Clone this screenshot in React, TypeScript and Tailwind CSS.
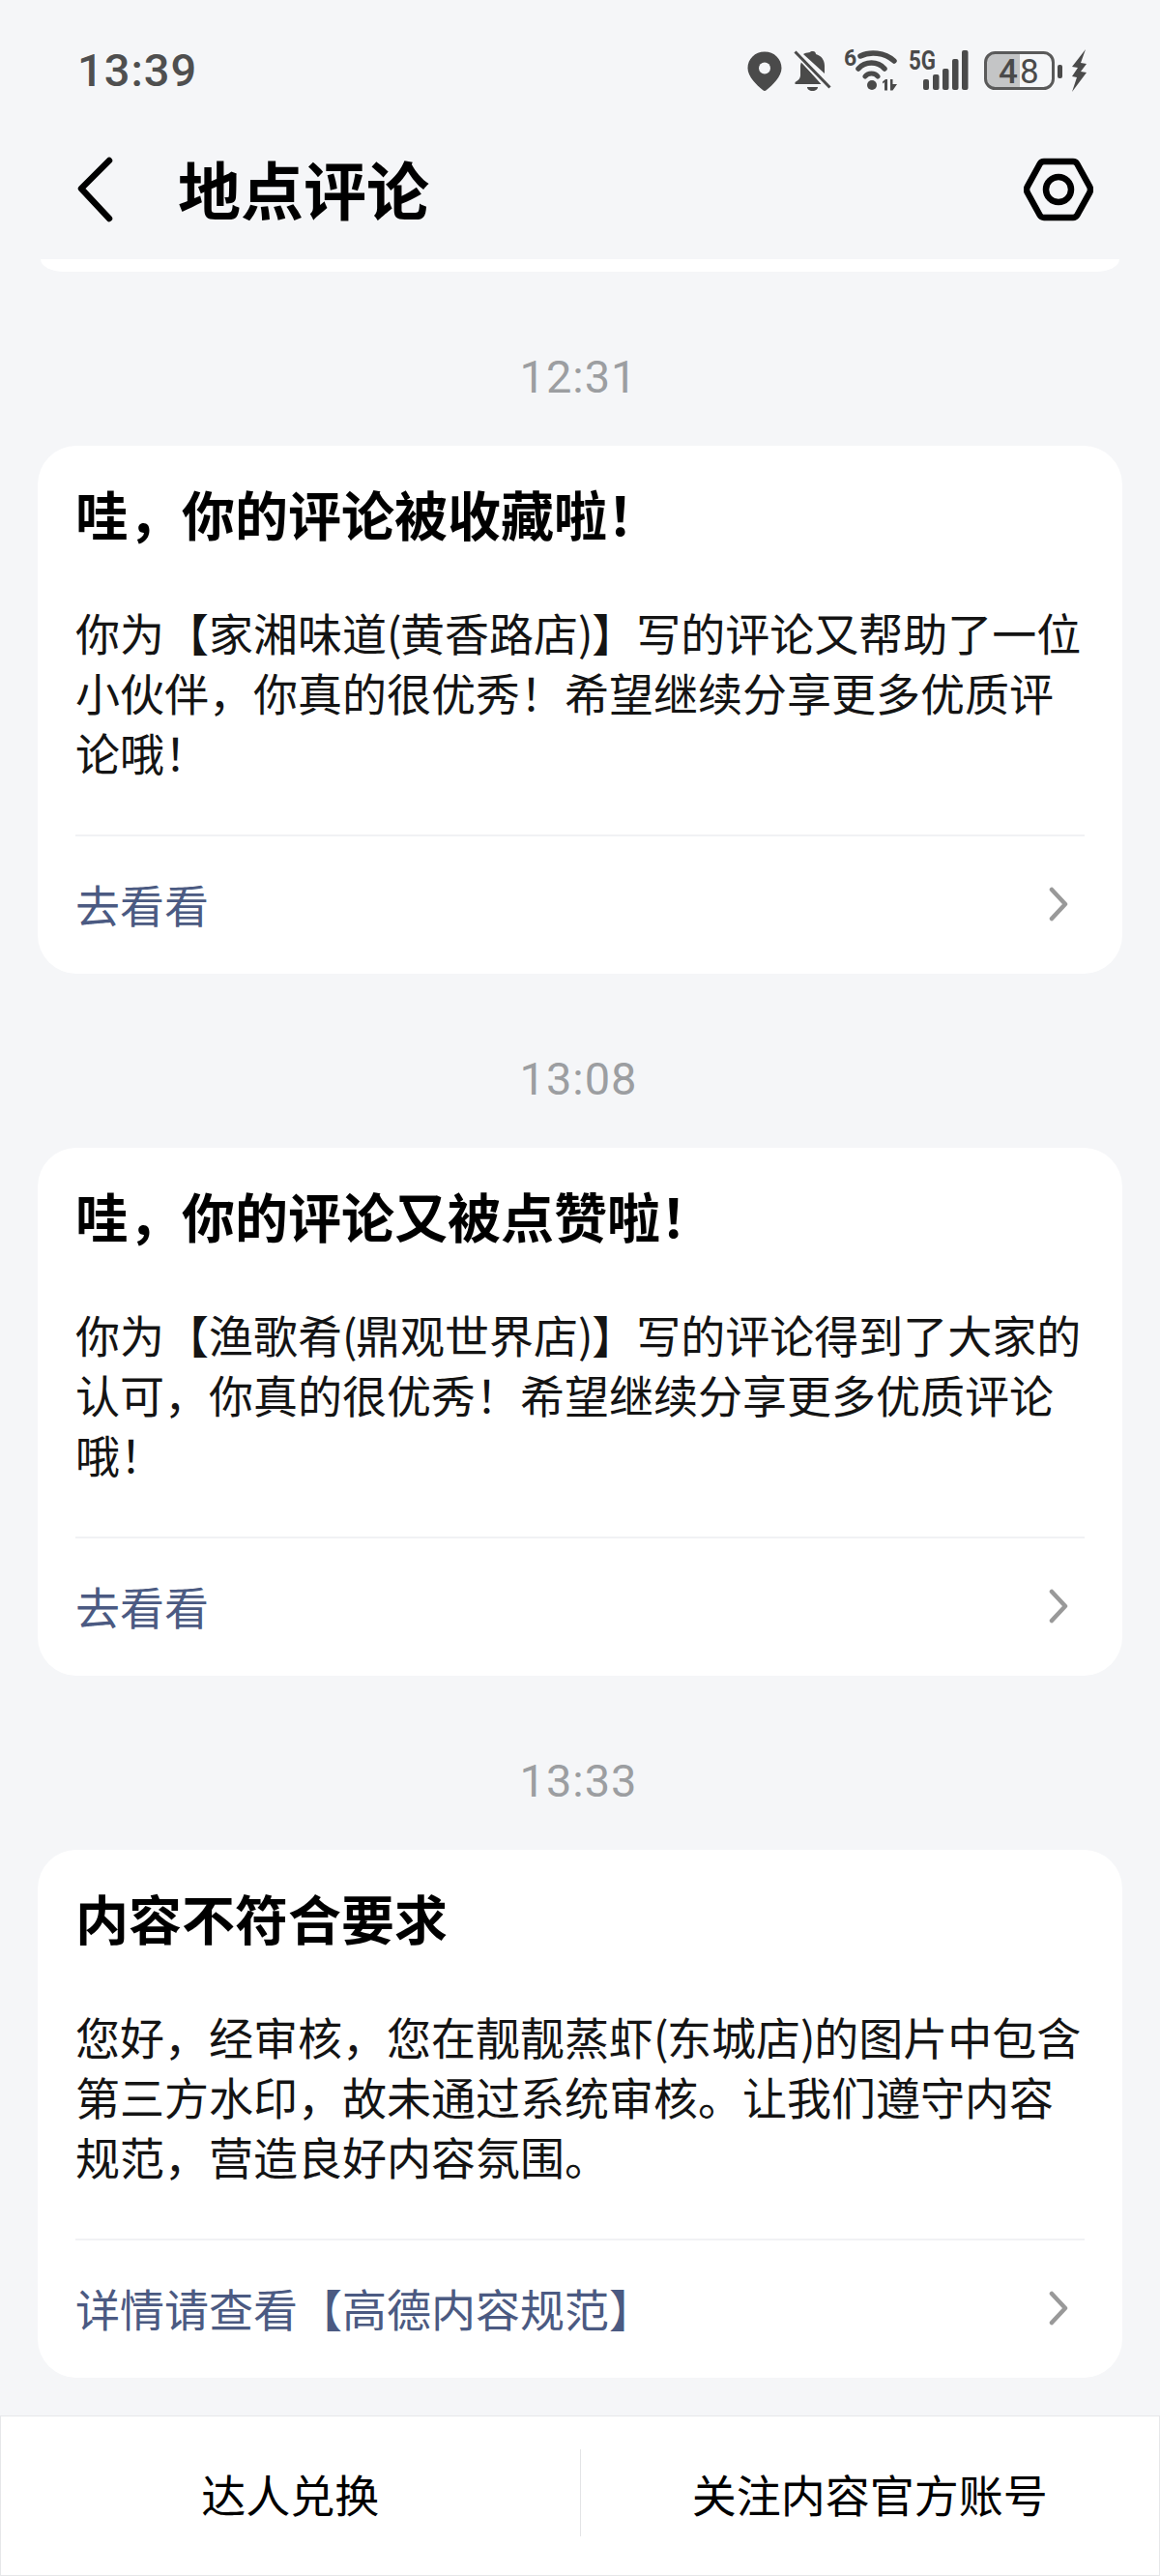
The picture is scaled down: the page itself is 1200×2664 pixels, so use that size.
import React from "react";

const CJK = '"Noto Sans CJK SC", "Noto Sans", sans-serif';

function Pin() {
  return (
    <svg width="36" height="41" viewBox="0 0 36 41" className="shrink-0">
      <path d="M18 0.5C8 .5 .5 8 .5 17.5c0 9 9.5 17.500 15.500 22.500a3 3 0 0 0 4 0C26 35 35.500 26.500 35.500 17.500 35.500 8 28 .5 18 .5Z" fill="#4a4a4a" />
      <circle cx="18" cy="17.500" r="6" fill="#f5f6f8" />
    </svg>
  );
}

function BellOff() {
  return (
    <svg width="39" height="43" viewBox="0 0 39 43" className="shrink-0">
      <path d="M20 1c2 0 3 1.500 3 3 5.500 1.500 9 6 9 12v8l-22-20c2-1 3-1.500 7-2 0-.5 1-1 3-1Z" fill="#4a4a4a" />
      <path d="M8 12c-.5 1.500-1 3-1 5v9c0 3-2 5-5.500 7v2h27L8 12Z" fill="#4a4a4a" />
      <path d="M33 31.500v1.500h-2Z" fill="#4a4a4a" />
      <path d="M14 38h11c0 2-2 4-5.500 4S14 40 14 38Z" fill="#4a4a4a" />
      <path d="M2 2 37 39" stroke="#f5f6f8" strokeWidth="6" />
      <path d="M1.500 1.500 37.500 38.500" stroke="#4a4a4a" strokeWidth="3" />
    </svg>
  );
}

function Wifi() {
  return (
    <svg width="56" height="64" viewBox="0 -10 56 64" className="shrink-0">
      <text x="0" y="17" fontFamily="Roboto, sans-serif" fontWeight="700" fontSize="23" fill="#4a4a4a">6</text>
      <path d="M17 7C27 2 42 3 52 12" fill="none" stroke="#4a4a4a" strokeWidth="5.500" strokeLinecap="round" />
      <path d="M15 20C22 12 35 12 42 20" fill="none" stroke="#4a4a4a" strokeWidth="5.500" strokeLinecap="round" />
      <path d="M22 28C25 24 32 24 35 28" fill="none" stroke="#4a4a4a" strokeWidth="5" strokeLinecap="round" />
      <circle cx="29" cy="37" r="5" fill="#4a4a4a" />
      <path d="M43 31l-3 2.500v2l2-1.500v8.500h3V31Z" fill="#4a4a4a" />
      <path d="M48 31h2.500v5H55l-4.500 6.500H48Z" fill="#4a4a4a" />
    </svg>
  );
}

function Signal() {
  return (
    <svg width="62" height="66" viewBox="0 -12 62 66" className="shrink-0">
      <text x="0" y="20" fontFamily="Roboto, sans-serif" fontWeight="700" fontSize="27" textLength="28" lengthAdjust="spacingAndGlyphs" fill="#4a4a4a">5G</text>
      <rect x="15" y="30" width="6" height="11" rx="2" fill="#4a4a4a" />
      <rect x="25" y="25" width="6.500" height="16" rx="2" fill="#4a4a4a" />
      <rect x="35" y="19" width="6.500" height="22" rx="2" fill="#4a4a4a" />
      <rect x="45" y="9" width="6.500" height="32" rx="2" fill="#4a4a4a" />
      <rect x="55" y="0" width="6.500" height="41" rx="2" fill="#4a4a4a" />
    </svg>
  );
}

function Battery() {
  return (
    <svg width="82" height="41" viewBox="0 0 82 41" className="shrink-0">
      <path d="M9 2h28v37H9a7 7 0 0 1-7-7V9a7 7 0 0 1 7-7Z" fill="#c4c5c6" />
      <rect x="1.500" y="1.500" width="70" height="37" rx="10" fill="none" stroke="#5a5a5a" strokeWidth="3" />
      <text x="15" y="33" fontFamily="Roboto, sans-serif" fontWeight="500" fontSize="35" fill="#4a4a4a">4</text>
      <text x="37" y="33" fontFamily="Roboto, sans-serif" fontSize="35" fill="#4a4a4a">8</text>
      <rect x="76" y="14" width="5" height="14" rx="2" fill="#4a4a4a" />
    </svg>
  );
}

function Bolt() {
  return (
    <svg width="18" height="44" viewBox="0 0 18 44" className="shrink-0">
      <path d="M16 0 2 18l6 1-6 9 5 1-5 15 15-20-6-1 6-8-6-1Z" fill="#4a4a4a" />
    </svg>
  );
}

function Chevron() {
  return (
    <svg width="20" height="36" viewBox="0 0 20 36" className="shrink-0">
      <path d="M3 3 17 18 3 33" fill="none" stroke="#999999" strokeWidth="4.500" strokeLinecap="round" strokeLinejoin="round" />
    </svg>
  );
}

function Time({ t }: { t: string }) {
  return (
    <div className="mt-[78px] mb-[40px] h-[62px] flex items-center justify-center pr-[3px] text-[47px] font-normal tracking-[1px] text-[#9c9ea1]" style={{ fontFamily: "Roboto, sans-serif" }}>
      {t}
    </div>
  );
}

function Line({ text }: { text: string }) {
  const parts = text.split(/([()])/);
  return (
    <div className="whitespace-nowrap">
      {parts.map((p, i) =>
        p === "(" || p === ")" ? (
          <span key={i} className="tracking-[-1.5px]">{p}</span>
        ) : (
          <span key={i}>{p}</span>
        )
      )}
    </div>
  );
}

function Card({ title, lines, link }: { title: string; lines: string[]; link: string }) {
  return (
    <div className="mx-[39px] bg-white rounded-[40px] pt-[33px] px-[39px]">
      <div className="h-[72px] leading-[72px] text-[55px] font-bold text-black whitespace-nowrap">{title}</div>
      <div className="mt-[56px] text-[46px] leading-[62px] text-[#141414]">
        {lines.map((l) => (
          <Line key={l} text={l} />
        ))}
      </div>
      <div className="mt-[55px] h-[144px] pb-[3px] border-t-2 border-[#f1f2f4] flex items-center justify-between pr-[17px]">
        <span className="text-[46px] text-[#4b5a82] whitespace-nowrap">{link}</span>
        <Chevron />
      </div>
    </div>
  );
}

export default function App() {
  return (
    <div className="w-[1200px] h-[2664px] overflow-hidden bg-[#f5f6f8] flex flex-col" style={{ fontFamily: CJK }}>
      <div className="h-[146px] flex items-center justify-between pl-[80px] pr-[75px] shrink-0">
        <span className="text-[47px] font-medium text-[#4f4f4f] tracking-[1px]" style={{ fontFamily: "Roboto, sans-serif" }}>13:39</span>
        <div className="flex items-center">
          <Pin />
          <div className="w-[12px]" />
          <BellOff />
          <div className="w-[13px]" />
          <Wifi />
          <div className="w-[11px]" />
          <Signal />
          <div className="w-[16px]" />
          <Battery />
          <div className="w-[7px]" />
          <Bolt />
        </div>
      </div>
      <div className="h-[100px] flex items-center justify-between pl-[80px] pr-[69px] shrink-0">
        <div className="flex items-center">
          <svg width="38" height="68" viewBox="0 0 38 68" className="shrink-0">
            <path d="M33 4 4 33l29 31" fill="none" stroke="#000" strokeWidth="6.500" strokeLinecap="round" strokeLinejoin="round" />
          </svg>
          <span className="ml-[66px] mb-[3px] text-[65px] font-bold text-black leading-none">地点评论</span>
        </div>
        <svg width="72" height="66" viewBox="0 0 72 66" className="shrink-0">
          <path d="M21 4h30a5 5 0 0 1 4.300 2.500L68 29.500a7 7 0 0 1 0 7L55.300 59.500A5 5 0 0 1 51 62H21a5 5 0 0 1-4.300-2.500L4 36.500a7 7 0 0 1 0-7L16.700 6.500A5 5 0 0 1 21 4Z" fill="none" stroke="#000" strokeWidth="6.500" />
          <circle cx="36" cy="33" r="13" fill="none" stroke="#000" strokeWidth="6.500" />
        </svg>
      </div>
      <div className="mt-[22px] mx-[42px] h-[13px] bg-white rounded-bl-[24px_13px] rounded-br-[24px_13px] shrink-0" />
      <Time t="12:31" />
      <Card
        title="哇，你的评论被收藏啦！"
        lines={["你为【家湘味道(黄香路店)】写的评论又帮助了一位", "小伙伴，你真的很优秀！希望继续分享更多优质评", "论哦！"]}
        link="去看看"
      />
      <Time t="13:08" />
      <Card
        title="哇，你的评论又被点赞啦！"
        lines={["你为【渔歌肴(鼎观世界店)】写的评论得到了大家的", "认可，你真的很优秀！希望继续分享更多优质评论", "哦！"]}
        link="去看看"
      />
      <Time t="13:33" />
      <Card
        title="内容不符合要求"
        lines={["您好，经审核，您在靓靓蒸虾(东城店)的图片中包含", "第三方水印，故未通过系统审核。让我们遵守内容", "规范，营造良好内容氛围。"]}
        link="详情请查看【高德内容规范】"
      />
      <div className="mt-[39px] h-[166px] pb-[6px] shrink-0 bg-white border border-[#e6e7e9] flex items-center">
        <div className="flex-1 text-center text-[46px] text-black">达人兑换</div>
        <div className="w-[1px] h-[90px] bg-[#e3e4e6]" />
        <div className="flex-1 text-center text-[46px] text-black">关注内容官方账号</div>
      </div>
    </div>
  );
}
